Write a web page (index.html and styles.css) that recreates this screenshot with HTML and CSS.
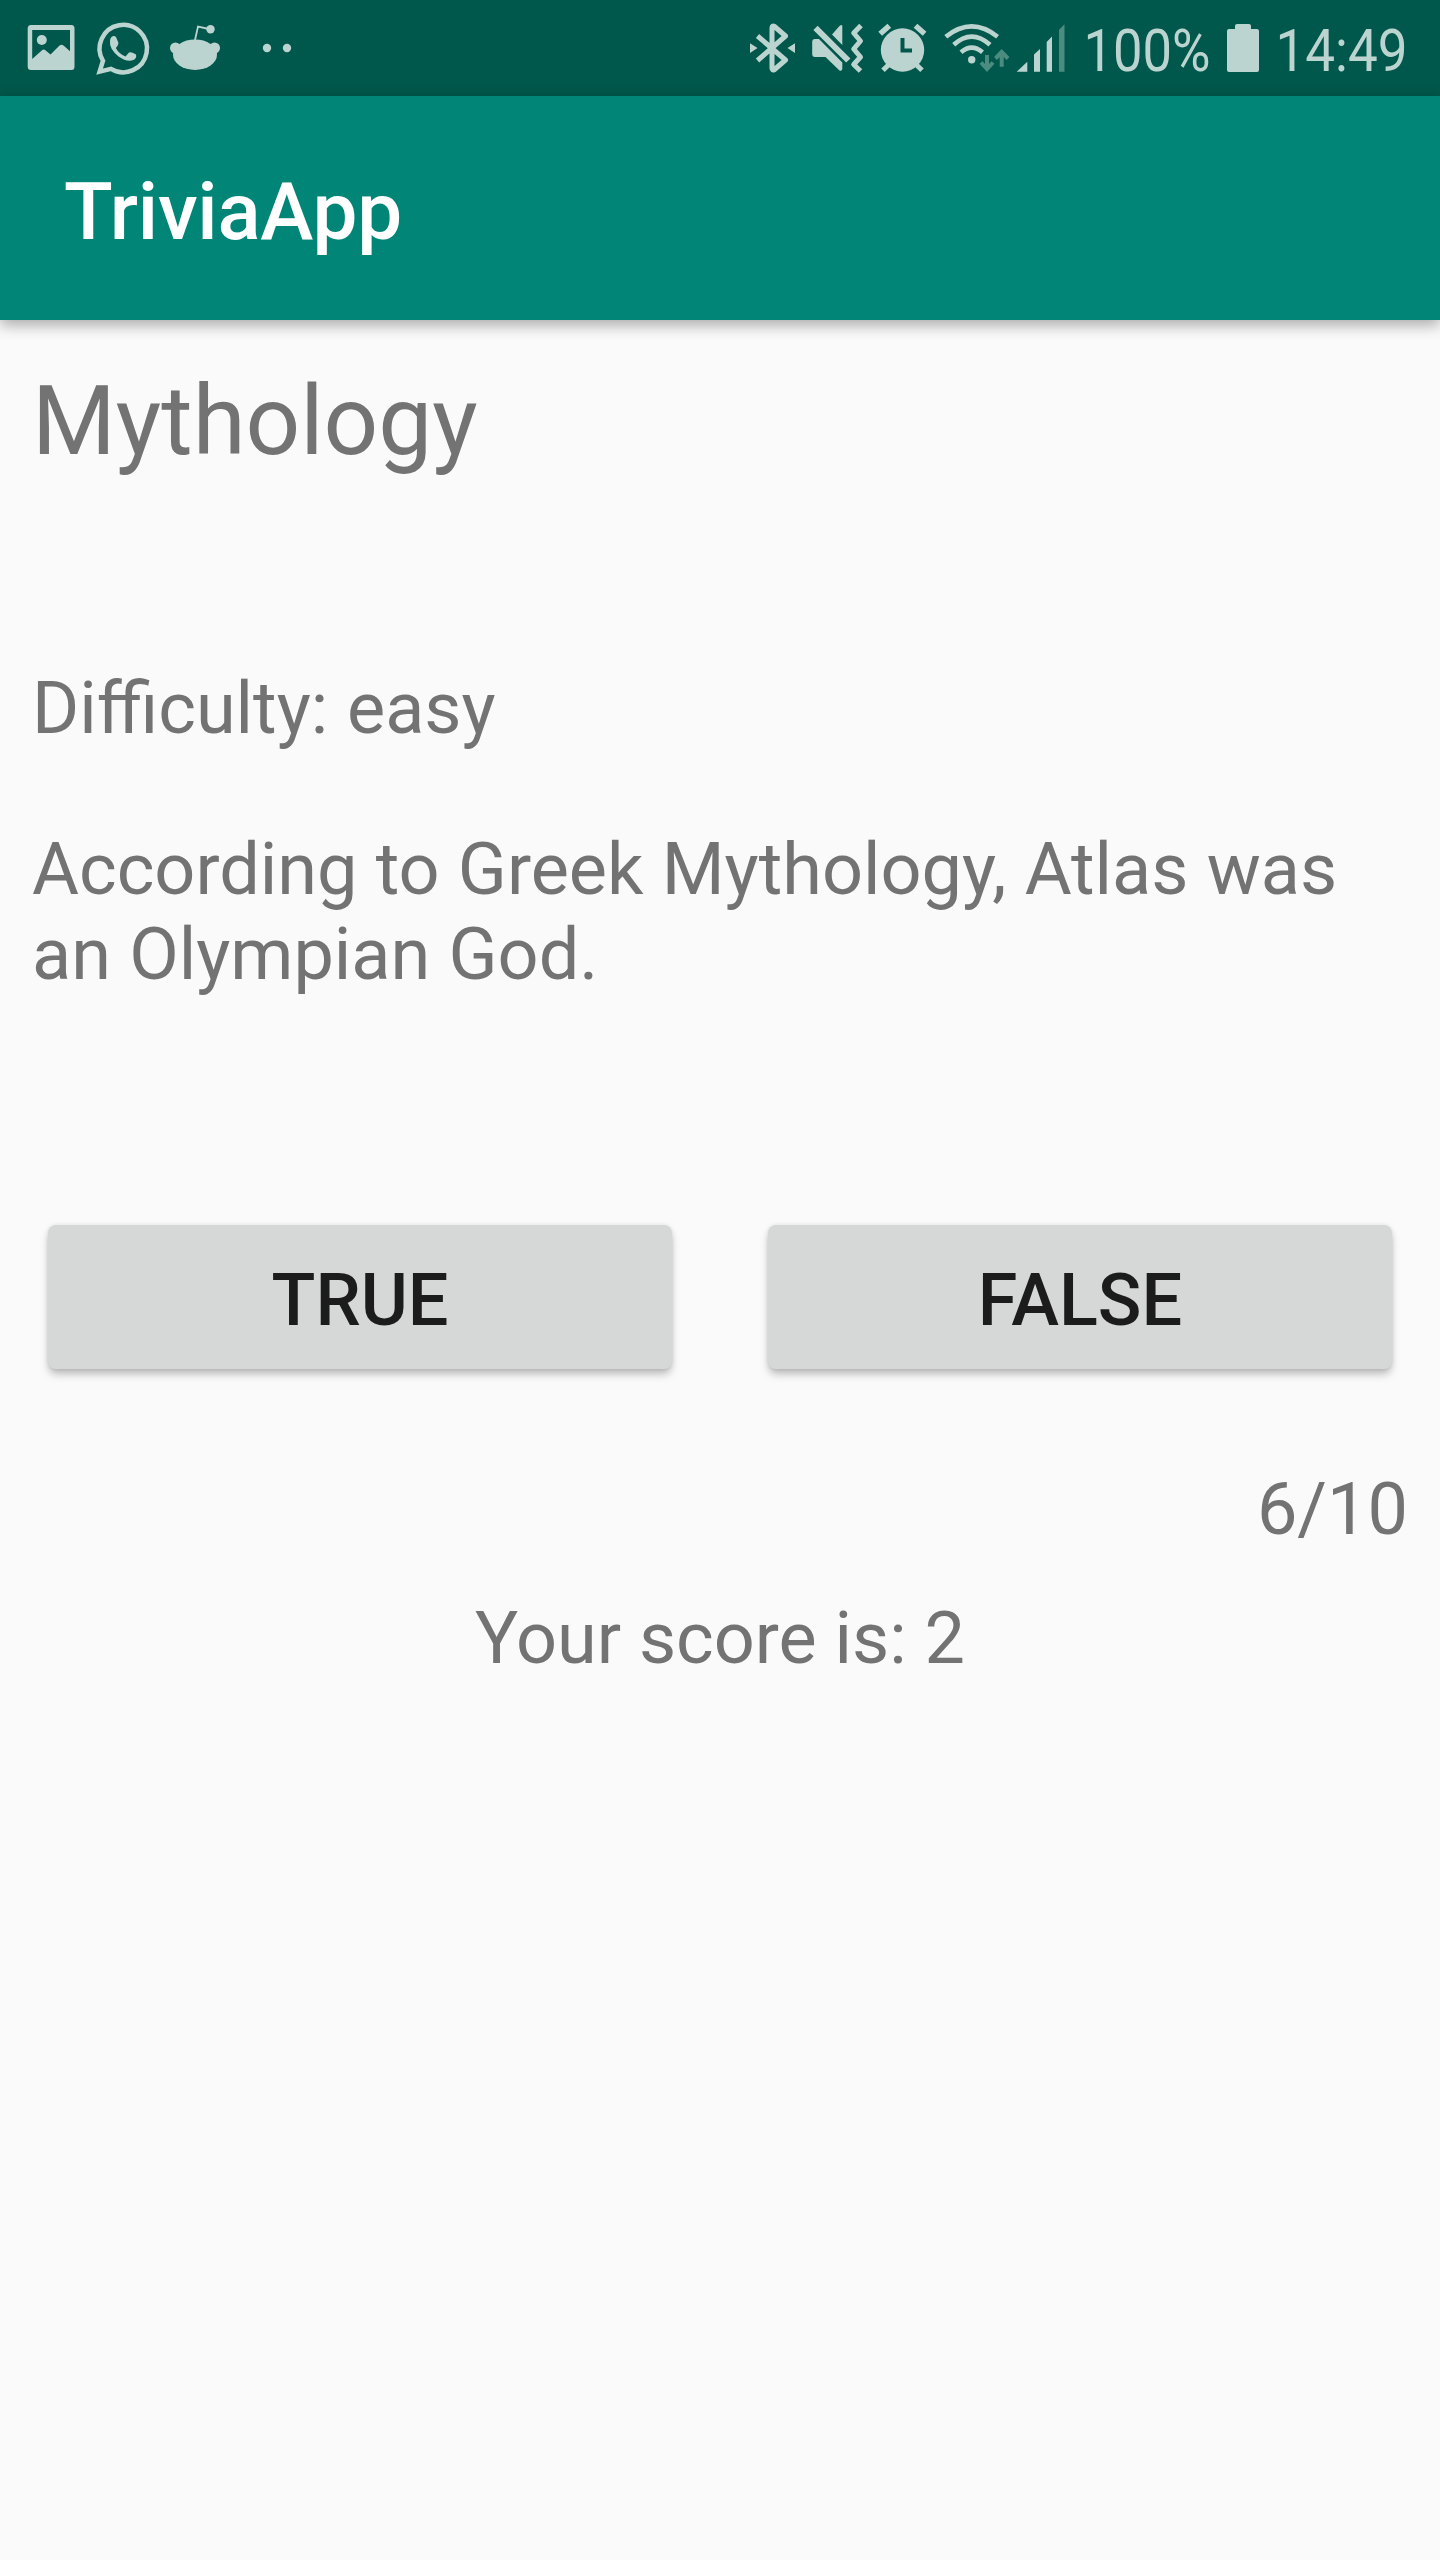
FILE: index.html
```html
<!DOCTYPE html>
<html lang="en">
<head>
<meta charset="utf-8">
<title>TriviaApp</title>
<link rel="stylesheet" href="styles.css">
</head>
<body>
<div class="status-bar">
  <div class="notifications">
    <svg class="icon" width="48" height="96" viewBox="27 0 48 96">
      <path fill-rule="evenodd" d="M31 25H71.500Q74.500 25 74.500 28.500V66.500Q74.500 70 71.500 70H31Q27.700 70 27.700 66.500V28.500Q27.700 25 31 25ZM32.200 30V59L42 50.200Q43.700 49 45.400 50.200L50.500 54.500L59.500 45.600Q61.500 44 63.500 45.600L70 51.200V30Z"/>
      <circle cx="41.800" cy="40" r="5"/>
    </svg>
    <svg class="icon" width="54" height="96" viewBox="95 0 54 96">
      <path class="line" stroke-width="4.500" d="M99.600 71.600L103 60.800A23.700 23.700 0 1 1 111 68.800Z"/>
      <path d="M111.500 37Q114 35 116 37L118.500 43Q118 46 115.800 48Q119 54 125.500 56.500L129 52.500Q131 51.500 136 54.500Q137 58 133.500 60Q127 62.500 118.500 56.500Q109 48.500 110 41Q110 38.500 111.500 37Z"/>
    </svg>
    <svg class="icon" width="52" height="96" viewBox="169 0 52 96">
      <ellipse cx="195" cy="54.700" rx="22" ry="15.300"/>
      <circle cx="175.500" cy="48" r="5.500"/><circle cx="214.500" cy="48" r="5.500"/>
      <path class="line" stroke-width="1.800" d="M195 40L198 26.600L209 29"/>
      <circle cx="210.500" cy="29.300" r="4.200"/>
    </svg>
    <svg class="icon dots" width="30" height="96" viewBox="262 0 30 96">
      <circle cx="267" cy="48" r="4.200"/><circle cx="287" cy="48" r="4.200"/>
    </svg>
  </div>
  <div class="system">
    <svg class="icon" width="46" height="96" viewBox="750 0 46 96">
      <path class="line" stroke-width="5" stroke-linejoin="round" d="M757.500 36L785.500 60L774.500 69.500Q772 71 772 68V28Q772 25 774.500 26.500L785.500 36L757.500 60.500"/>
      <path d="M750 43.200V53L757.500 48ZM795 43.200V53L787.500 48Z"/>
    </svg>
    <svg class="icon" width="52" height="96" viewBox="812 0 52 96">
      <path d="M815 39H819L842.300 62.500V69Q842 71.500 839.500 70.500L825.500 57H815Q812.200 57 812.200 54V42Q812.200 39 815 39ZM842.300 26V45L832 34.500L839.500 26Q842 24 842.300 26Z"/>
      <path class="line slash" stroke-width="2" d="M820.500 27.500L844 51"/>
      <path class="line" stroke-width="6" d="M815.500 27.800L848.300 60.500"/>
      <path class="line" stroke-width="5" stroke-linejoin="round" d="M861 25.500L853.700 33L860.500 41L853.700 49L860.500 57L853.700 64.500L860.500 71"/>
    </svg>
    <svg class="icon" width="48" height="96" viewBox="880 0 48 96">
      <circle cx="902.500" cy="50" r="21.700"/>
      <path class="line" stroke-width="5.500" d="M880.200 33.800L889.300 25.800M915.500 25.800L924.600 33.800"/>
      <path class="line" stroke-width="5" d="M883 70.200L890 63.500M922 70.200L915 63.500"/>
      <path class="line hands" stroke-width="4" d="M902.500 38V50.500H912"/>
    </svg>
    <svg class="icon" width="66" height="96" viewBox="944 0 66 96">
      <path class="line" stroke-width="4.600" d="M945.800 36.700Q971.700 16 997.600 36.700M953.700 44.700Q971.700 28.500 990 44.700M961 52.200Q971.700 43 982.500 52.200"/>
      <circle cx="971.700" cy="59.700" r="3.700"/>
      <path class="line faint" stroke-width="4" d="M987 55V68.500M981 62.500L987 69L993 62.500M1001.700 66.800V52M995.500 58.500L1001.700 52L1008 58.500"/>
    </svg>
    <svg class="icon signal" width="48" height="96" viewBox="1017 0 48 96">
      <path d="M1016.700 71.800L1027.300 61.800V71.800ZM1034 71.800V54.500L1040 49V71.800ZM1046.700 71.800V42L1052 36.500V71.800Z"/>
      <path class="dim" d="M1059 71.800V29.800L1064.500 24.200V71.800Z"/>
    </svg>
    <svg class="label" width="130" height="96" viewBox="1083 0 130 96">
      <text x="1083.500" y="71" textLength="127" lengthAdjust="spacingAndGlyphs">100%</text>
    </svg>
    <svg class="icon" width="32" height="96" viewBox="1227 0 32 96">
      <path d="M1229 29H1235V26Q1235 24 1237 24H1249Q1251 24 1251 26V29H1257Q1259 29 1259 31V70Q1259 72 1257 72H1229Q1227 72 1227 70V31Q1227 29 1229 29Z"/>
    </svg>
    <svg class="label clock" width="134" height="96" viewBox="1275 0 134 96">
      <text x="1275.500" y="71" textLength="132" lengthAdjust="spacingAndGlyphs">14:49</text>
    </svg>
  </div>
</div>
<header class="app-bar"><h1>TriviaApp</h1></header>
<main class="content">
  <h2 class="category">Mythology</h2>
  <p class="difficulty">Difficulty: easy</p>
  <p class="question">According to Greek Mythology, Atlas was an Olympian God.</p>
  <div class="answers">
    <button class="answer">TRUE</button>
    <button class="answer">FALSE</button>
  </div>
  <p class="progress">6/10</p>
  <p class="score">Your score is: 2</p>
</main>
</body>
</html>
```
FILE: styles.css
```css
* { box-sizing: border-box; }
body {
  margin: 0;
  min-height: 2560px;
  background: #fafafa;
  color: #737373;
  font-family: Roboto, sans-serif;
  font-size: 72px;
  line-height: 85px;
}
h1, h2, p { margin: 0; font-weight: 400; }
.status-bar {
  height: 96px;
  padding: 0 31px 0 27px;
  display: flex;
  justify-content: space-between;
  background: #00574b;
}
.notifications, .system { display: flex; }
.notifications { gap: 20px; }
.dots { margin-left: 21px; }
.system { gap: 16px; }
.signal { margin-left: -9px; }
.label { margin-left: 2px; }
.label + .icon { margin-left: -2px; }
.label.clock { margin-left: 0; }
.icon, .label { display: block; flex: none; fill: #bcd4d0; overflow: visible; }
.label { font-size: 60px; }
.line { fill: none; stroke: #bcd4d0; }
.slash, .hands { stroke: #00574b; }
.faint { stroke: #4b8c81; }
.dim { fill: #4b8c81; }
.app-bar {
  height: 224px;
  padding: 69px 64px 0;
  background: #008577;
  box-shadow: 0 5px 14px rgba(0, 0, 0, .33);
}
.app-bar h1 {
  color: #fff;
  font-size: 80px;
  font-weight: 500;
  line-height: 94px;
  letter-spacing: -.25px;
}
.content { padding: 45px 32px 0; }
.category { font-size: 96px; line-height: 113px; }
.difficulty { margin-top: 188px; word-spacing: 1px; }
.question { margin-top: 76px; word-spacing: .4px; }
.answers {
  display: flex;
  gap: 96px;
  margin-top: 228px;
  padding: 0 16px;
}
.answer {
  flex: 1;
  height: 144px;
  padding: 7px 0 0;
  border: 0;
  border-radius: 8px;
  background: #d6d8d7;
  box-shadow: 0 6px 8px -1px rgba(0, 0, 0, .26), 0 0 4px rgba(0, 0, 0, .1);
  color: #1c1c1c;
  font: 500 72px/85px Roboto, sans-serif;
}
.progress { margin-top: 98px; text-align: right; }
.score { margin-top: 44px; text-align: center; }
```
